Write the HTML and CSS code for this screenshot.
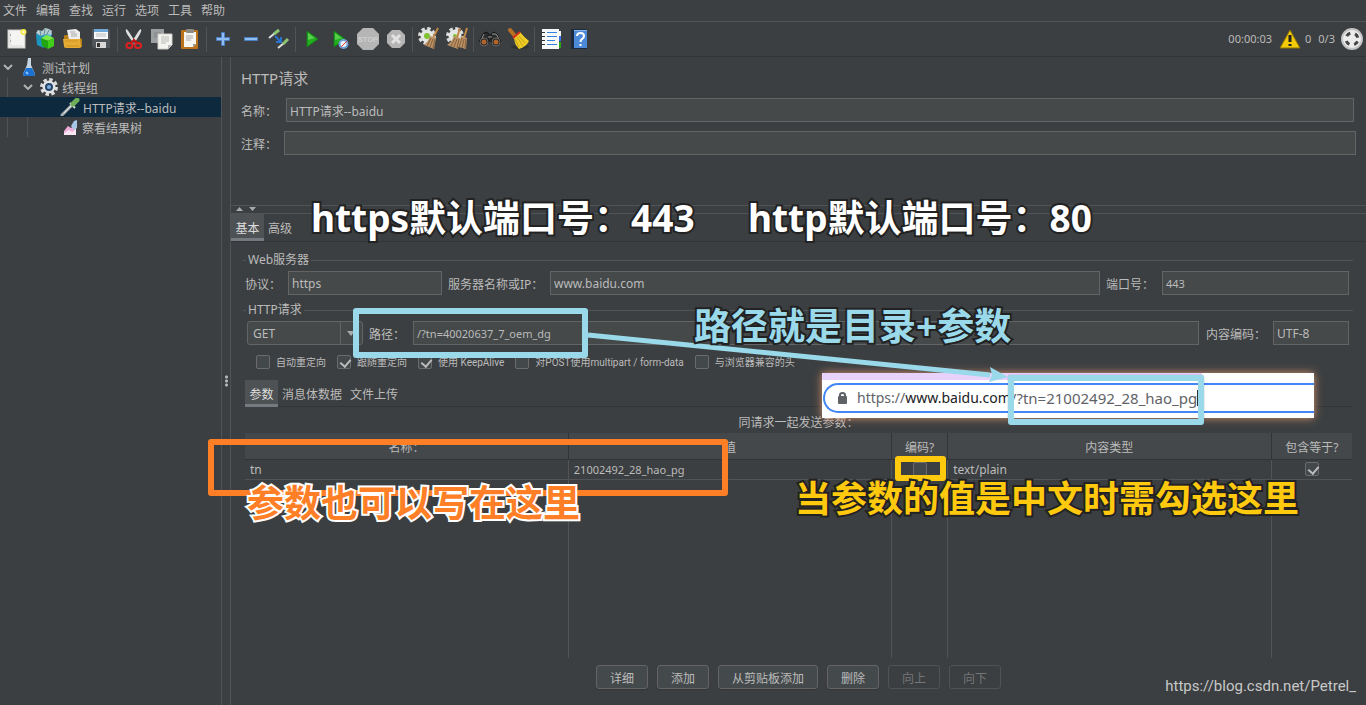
FILE: index.html
```html
<!DOCTYPE html>
<html lang="zh-CN">
<head>
<meta charset="utf-8">
<title>HTTP请求--baidu</title>
<link rel="stylesheet" href="styles.css">
</head>
<body>
<div class="app">
  <nav class="menubar">
    <button class="menu">文件</button><button class="menu">编辑</button><button class="menu">查找</button><button class="menu">运行</button><button class="menu">选项</button><button class="menu">工具</button><button class="menu">帮助</button>
  </nav>

  <div class="toolbar">
    <button class="tool" aria-label="新建"><svg width="20" height="22" viewBox="0 0 20 22"><rect x="1" y="2" width="17" height="18" fill="#f4f4f2" stroke="#c9c9c4"/><path d="M3 4v14M3 18h13" stroke="#d8d8d6" fill="none"/><path d="M3 7h1M3 13h1" stroke="#777"/><circle cx="16.500" cy="4" r="3" fill="#f5e43c"/><circle cx="16.500" cy="4" r="1.500" fill="#fffbd0"/></svg></button>
    <button class="tool" aria-label="模板"><svg width="20" height="22" viewBox="0 0 20 22"><path d="M1 6l8-1v15l-7-3z" fill="#1c94bd"/><path d="M9 4l8 1-1 5-7 3z" fill="#49b6d5"/><path d="M1 5l2-3 4 1 3-3 4 1 3 2-1 4-5-1-5 2z" fill="#b9cdd2"/><path d="M5 2l1 6M10 1l-1 6M14 2l-3 6" stroke="#568b95"/><path d="M6 10l6-3 7 3-6 3z" fill="#7bea42"/><path d="M6 10l7 3v8l-6-3z" fill="#22a60f"/><path d="M13 13l6-3v8l-6 3z" fill="#42cd1b"/></svg></button>
    <button class="tool" aria-label="打开"><svg width="20" height="22" viewBox="0 0 20 22"><path d="M1 8q0-1 2-1h3l2 3h9q2 0 2 2v7H1z" fill="#b88118"/><path d="M4 2l9-1 4 3v8H6z" fill="#eee"/><path d="M7 4h5M8 6h6M8 8h6" stroke="#aaa"/><path d="M0 11h17l1 8q0 1-2 1H3q-2 0-2-2z" fill="#e5ac36"/><path d="M2 13h13M3 18h13" stroke="#cf911c"/></svg></button>
    <button class="tool" aria-label="保存"><svg width="20" height="22" viewBox="0 0 20 22"><path d="M1 1h17l1 1v18H3l-2-2z" fill="#50555c"/><path d="M3 1h14v10H3z" fill="#f5f7f8"/><path d="M3 1h14v3H3z" fill="#6fa7d7"/><path d="M5 6h10M5 8h10" stroke="#bbb"/><path d="M5 14h10v6H5z" fill="#d8d8d8"/><path d="M6 15h3v4H6z" fill="#333"/></svg></button>
    <span class="sep"></span>
    <button class="tool" aria-label="剪切"><svg width="18" height="22" viewBox="0 0 18 22"><path d="M1 1q1 0 3 3l7 11-2 1L2 6Q0 3 1 1zM16 1q-1 0-3 3L6 15l3 1 6-10q2-3 1-5z" fill="#dfdfdf"/><ellipse cx="4.500" cy="17.500" rx="3" ry="2.500" fill="none" stroke="#e02020" stroke-width="2"/><ellipse cx="13" cy="17.500" rx="3" ry="2.500" fill="none" stroke="#e02020" stroke-width="2"/><path d="M6 15l3-3 3 3" stroke="#c41414" stroke-width="2" fill="none"/></svg></button>
    <button class="tool" aria-label="复制"><svg width="22" height="22" viewBox="0 0 22 22"><path d="M0 1h13v14H0z" fill="#9da0a2"/><path d="M3 5h7M3 7h7M3 9h5" stroke="#818486"/><path d="M7 6h14v11l-4 4H7z" fill="#f3f3ef" stroke="#cfcfca"/><path d="M10 9h8M10 11h8M10 13h8M10 15h5" stroke="#b8b8b4"/><path d="M17 21v-4h4z" fill="#bbb"/></svg></button>
    <button class="tool" aria-label="粘贴"><svg width="20" height="22" viewBox="0 0 20 22"><rect x="1" y="2" width="17" height="19" rx="1" fill="#bb731b"/><path d="M4 4h12v12l-3 3H4z" fill="#f5f5f1"/><rect x="6" y="1" width="8" height="4" rx="1" fill="#8c8b84"/><path d="M6 8h7M6 10h7M6 12h5" stroke="#aaa"/><path d="M13 19v-3h3z" fill="#999"/></svg></button>
    <span class="sep"></span>
    <button class="tool" aria-label="展开"><svg width="16" height="16" viewBox="0 0 16 16"><path d="M6.500 1.500h3v5h5v3h-5v5h-3v-5h-5v-3h5z" fill="#8fbdf2" stroke="#4b7fc4"/></svg></button>
    <button class="tool" aria-label="折叠"><svg width="16" height="16" viewBox="0 0 16 16"><path d="M1.500 6.500h13v3h-13z" fill="#8fbdf2" stroke="#4b7fc4"/></svg></button>
    <button class="tool" aria-label="切换"><svg width="22" height="22" viewBox="0 0 22 22"><path d="M1 10l6-5" stroke="#ddd" stroke-width="2"/><path d="M6 6l5-4" stroke="#8cc474" stroke-width="3"/><path d="M10 20l6-5" stroke="#ddd" stroke-width="2"/><path d="M15 16l5-5" stroke="#8cc474" stroke-width="3"/><path d="M7 8l5 5M13 9v5H8" stroke="#2873d0" stroke-width="2" fill="none"/></svg></button>
    <span class="sep"></span>
    <button class="tool" aria-label="启动"><svg width="14" height="20" viewBox="0 0 14 20"><path d="M2 2l11 8-11 8z" fill="#23ad20" stroke="#137c14"/><path d="M3 4l7 5-7 2z" fill="#56cf4b"/></svg></button>
    <button class="tool" aria-label="不停顿启动"><svg width="18" height="22" viewBox="0 0 18 22"><path d="M3 3l11 8-11 8z" fill="#23ad20" stroke="#137c14"/><path d="M4 5l7 5-7 2z" fill="#56cf4b"/><circle cx="12.500" cy="16" r="4" fill="#eef3fa" stroke="#6ea3d8" stroke-width="2"/><path d="M10 19l6-6" stroke="#e03c31"/></svg></button>
    <button class="tool" aria-label="停止"><svg width="24" height="24" viewBox="0 0 24 24"><path d="M7 1h10l6 6v10l-6 6H7l-6-6V7z" fill="#b5b5b5"/><text x="12" y="15" text-anchor="middle" class="stop-text">STOP</text></svg></button>
    <button class="tool" aria-label="关闭"><svg width="20" height="20" viewBox="0 0 20 20"><path d="M6 1h8l5 5v8l-5 5H6l-5-5V6z" fill="#b5b5b5"/><path d="M6 6l8 8M14 6l-8 8" stroke="#e2e2e2" stroke-width="3"/></svg></button>
    <span class="sep"></span>
    <button class="tool" aria-label="清除"><svg width="22" height="24" viewBox="0 0 22 24"><circle cx="9" cy="9" r="7.500" fill="none" stroke="#ddd" stroke-width="3" stroke-dasharray="3.400 2.490"/><circle cx="9" cy="9" r="6.500" fill="#e5e7e4"/><circle cx="9" cy="9" r="3" fill="#82c332"/><path d="M20 1l-5 10" stroke="#c28848" stroke-width="2"/><path d="M12 9l6 2-2 11-10-4q4-3 6-9z" fill="#ba9266"/><path d="M13 11l-4 8M15 12l-3 8M17 12l-2 9" stroke="#86603b"/></svg></button>
    <button class="tool" aria-label="清除全部"><svg width="24" height="24" viewBox="0 0 24 24"><circle cx="10" cy="9" r="7.500" fill="none" stroke="#ddd" stroke-width="3" stroke-dasharray="3.400 2.490"/><circle cx="10" cy="9" r="6.500" fill="#e5e7e4"/><circle cx="10" cy="9" r="2" fill="#82c332"/><path d="M15 1l-3 10M22 1l-3 10" stroke="#c28848" stroke-width="2"/><path d="M9 9l6 2-2 11-11-4q5-3 7-9zM16 9l6 2-1 11-11-3q5-4 6-10z" fill="#ba9266"/><path d="M10 11l-4 8M12 12l-3 8M14 12l-2 9M17 11l-3 9M19 12l-2 9M21 12l-1 9" stroke="#86603b"/></svg></button>
    <span class="sep"></span>
    <button class="tool" aria-label="查找"><svg width="24" height="18" viewBox="0 0 24 18"><path d="M5 4l3-2 3 2v8H1zM13 4l3-2 3 2 4 8H13z" fill="#292b2c" stroke="#111"/><path d="M6 4l-3 6M14 4h4l3 5M10 7h4" stroke="#9a9a9a" fill="none"/><circle cx="6" cy="12" r="4" fill="#222" stroke="#666"/><circle cx="18" cy="12" r="4" fill="#222" stroke="#666"/><circle cx="6" cy="12" r="2.500" fill="#b0652c"/><circle cx="18" cy="12" r="2.500" fill="#b0652c"/></svg></button>
    <button class="tool" aria-label="重置查找"><svg width="24" height="24" viewBox="0 0 24 24"><ellipse cx="14" cy="20" rx="9" ry="2" fill="#303234"/><path d="M4 3l5 6" stroke="#b87023" stroke-width="4" stroke-linecap="round"/><path d="M8 10l6-5q4 5 9 9-3 6-10 8-5-5-5-12z" fill="#edcd25"/><path d="M11 10l6 9M13 9l6 7M9 12l4 8" stroke="#c3a012"/><path d="M7 11l7-6" stroke="#d52d1e" stroke-width="2"/></svg></button>
    <span class="sep"></span>
    <button class="tool" aria-label="函数助手"><svg width="22" height="22" viewBox="0 0 22 22"><path d="M18 3h3v5h-3z" fill="#f2f2f2"/><path d="M18 8h3v5h-3z" fill="#3776e4"/><path d="M18 14h3v6h-3z" fill="#25a319"/><rect x="2" y="1" width="17" height="20" fill="#f5f7f9"/><path d="M7 4.500h10M7 8.500h10M7 12.500h8M7 16.500h10" stroke="#3082dd"/><path d="M1 4.500h4M1 8.500h4M1 12.500h4M1 16.500h4" stroke="#333"/></svg></button>
    <button class="tool" aria-label="帮助"><svg width="18" height="22" viewBox="0 0 18 22"><path d="M1 1h16v20H1z" fill="#1c2b3f"/><path d="M4 2h13v18H4z" fill="#4d89d9"/><path d="M4 2h13v1H4z" fill="#8db8ee"/><path d="M7 8q0-3 3.500-3T14 8q0 2-2 3-1.500 1-1.500 3M10.500 16v2" stroke="#fff" stroke-width="2" fill="none"/></svg></button>
    <div class="status">
      <span>00:00:03</span>
      <svg class="warn" width="22" height="20" viewBox="0 0 22 20"><path d="M11 1l10 18H1z" fill="#f3c908" stroke="#8b7408" stroke-linejoin="round"/><path d="M11 6v7" stroke="#222" stroke-width="3"/><path d="M11 15v2" stroke="#222" stroke-width="3"/></svg>
      <span>0</span><span class="threads">0/3</span>
      <svg width="24" height="24" viewBox="0 0 24 24"><circle cx="12" cy="12" r="11" fill="#c4c4c4"/><circle cx="12" cy="12" r="9" fill="#ececec"/><circle cx="12" cy="12" r="6" fill="none" stroke="#444" stroke-width="3" stroke-dasharray="4.420 5" stroke-dashoffset="-2.500"/></svg>
    </div>
  </div>

  <div class="body">
    <aside class="tree">
      <div class="node"><svg class="chev" width="10" height="6" viewBox="0 0 10 6"><path d="M1 1l4 4 4-4" stroke="#b0b0b0" stroke-width="2" fill="none"/></svg><svg class="flask" width="14" height="20" viewBox="0 0 14 20"><path d="M6 1h3v7l4 9q0 2-2 2H3q-2 0-2-2l4-9z" fill="#c6d5e2"/><path d="M4 11h6l3 6q0 2-2 2H3q-2 0-2-2z" fill="#1c70d1"/><path d="M4 15l2 2" stroke="#8bc0ff" stroke-width="2"/></svg><span>测试计划</span></div>
      <div class="node level-1"><svg class="chev" width="10" height="6" viewBox="0 0 10 6"><path d="M1 1l4 4 4-4" stroke="#b0b0b0" stroke-width="2" fill="none"/></svg><svg class="gear" width="18" height="18" viewBox="0 0 18 18"><circle cx="9" cy="9" r="7.500" fill="none" stroke="#dcdcdc" stroke-width="3" stroke-dasharray="3.400 2.490"/><circle cx="9" cy="9" r="6.500" fill="#e4e4e4"/><circle cx="9" cy="9" r="4" fill="#24466d"/><circle cx="9" cy="9" r="2" fill="#84add8"/></svg><span>线程组</span></div>
      <div class="node level-2 selected"><svg width="20" height="18" viewBox="0 0 20 18"><path d="M2 17l10-10" stroke="#a9aeb0" stroke-width="3" stroke-linecap="round"/><path d="M4 15l7-7" stroke="#e8e8e8"/><path d="M10 5l5 5" stroke="#ddd" stroke-width="2"/><path d="M13 6l4-4" stroke="#6fae5b" stroke-width="5" stroke-linecap="round"/></svg><span>HTTP请求--baidu</span></div>
      <div class="node level-2"><svg width="19" height="18" viewBox="0 0 19 18"><path d="M2 1v15" stroke="#292b2d" stroke-dasharray="1 2"/><path d="M4 13l4-5 3 2 5-4v10H4z" fill="#f0acd9"/><path d="M4 15l5-3 3 2 4-3v6H4z" fill="#fae6f4"/><path d="M11 8l3-5 3-1v8l-3 2z" fill="#a6c7e7"/></svg><span>察看结果树</span></div>
    </aside>
    <div class="divider"><span class="grip"></span></div>

    <main class="panel">
      <section class="top">
        <h1>HTTP请求</h1>
        <div class="field name"><label for="name">名称：</label><input id="name" value="HTTP请求--baidu"></div>
        <div class="field note"><label for="note">注释：</label><input id="note"></div>
      </section>
      <div class="hsplit"><i class="up"></i><i class="down"></i></div>
      <div class="tabs outer"><button class="tab active">基本</button><button class="tab">高级</button></div>

      <div class="content">
        <section class="group">
          <h2>Web服务器</h2>
          <div class="line">
            <label class="w-first" for="proto">协议：</label><input class="w-proto" id="proto" value="https">
            <label class="w-server" for="server">服务器名称或IP：</label><input class="grow" id="server" value="www.baidu.com">
            <label class="w-port" for="port">端口号：</label><input class="port num" id="port" value="443">
          </div>
        </section>
        <section class="group">
          <h2>HTTP请求</h2>
          <div class="line second">
            <span class="combo"><select aria-label="方法"><option>GET</option></select></span>
            <label class="w-path" for="path">路径：</label><input class="grow num" id="path" value="/?tn=40020637_7_oem_dg">
            <label class="w-enc" for="enc">内容编码：</label><input class="enc" id="enc" value="UTF-8">
          </div>
        </section>
        <div class="checks">
          <label><input type="checkbox">自动重定向</label>
          <label><input type="checkbox" checked>跟随重定向</label>
          <label><input type="checkbox" checked>使用 KeepAlive</label>
          <label><input type="checkbox">对POST使用multipart / form-data</label>
          <label><input type="checkbox">与浏览器兼容的头</label>
        </div>
        <div class="tabs inner"><button class="tab active">参数</button><button class="tab">消息体数据</button><button class="tab">文件上传</button></div>
        <p class="caption">同请求一起发送参数：</p>
        <div class="table-wrap">
          <table>
            <colgroup><col><col><col class="c-enc"><col><col class="c-eq"></colgroup>
            <thead><tr><th>名称：</th><th>值</th><th>编码?</th><th>内容类型</th><th>包含等于?</th></tr></thead>
            <tbody>
              <tr class="row"><td>tn</td><td class="num">21002492_28_hao_pg</td><td class="mid"><input type="checkbox" aria-label="编码"></td><td>text/plain</td><td class="mid"><input type="checkbox" checked aria-label="包含等于"></td></tr>
              <tr class="rest"><td></td><td></td><td></td><td></td><td></td></tr>
            </tbody>
          </table>
        </div>
        <div class="actions">
          <button>详细</button><button>添加</button><button>从剪贴板添加</button><button>删除</button><button disabled>向上</button><button disabled>向下</button>
        </div>
      </div>
    </main>
  </div>
</div>

<div class="notes">
  <div class="address">
    <div class="omnibox">
      <svg width="12" height="14" viewBox="0 0 12 14"><rect x="1" y="5" width="9" height="8" rx="1" fill="#5f6368"/><path d="M3 6V4q0-2 2.500-2T8 4v2" stroke="#5f6368" stroke-width="2" fill="none"/></svg>
      <span class="scheme">https://</span><span class="host">www.baidu.com</span><span class="query">/?tn=21002492_28_hao_pg</span>
    </div>
  </div>
  <div class="frame frame-path"></div>
  <div class="frame frame-query"></div>
  <div class="frame frame-params"></div>
  <div class="frame frame-encode"></div>
  <svg class="arrow" width="430" height="60" viewBox="0 0 430 60"><path d="M4 7L406 47" stroke="#99d9ea" stroke-width="5"/><path d="M406 39l18 10-19 5 3-7z" fill="#99d9ea"/></svg>
  <p class="big white n-https">https默认端口号：443</p>
  <p class="big white n-http">http默认端口号：80</p>
  <p class="big cyan">路径就是目录+参数</p>
  <p class="big orange">参数也可以写在这里</p>
  <p class="big yellow">当参数的值是中文时需勾选这里</p>
  <p class="watermark">https://blog.csdn.net/Petrel_</p>
</div>
</body>
</html>
```
FILE: styles.css
```css
* { box-sizing: border-box; }
body {
  margin: 0;
  background: #3c3f41;
  color: #bbb;
  font: 12px/16px "Noto Sans", "Noto Sans CJK SC", sans-serif;
}
button, input, select { font: inherit; color: inherit; margin: 0; }
button { border: 0; background: none; padding: 0; }
svg { display: block; flex: none; }
h1, h2, p { margin: 0; font-weight: normal; }
.app { display: flex; flex-direction: column; min-height: 100vh; }

.menubar { display: flex; gap: 9px; height: 22px; padding: 1px 3px 0; border-bottom: 1px solid #515456; }
.toolbar { display: flex; align-items: center; height: 35px; padding: 0 2px 0 3px; border-bottom: 1px solid #323537; }
.tool { display: flex; align-items: center; justify-content: center; width: 28px; height: 28px; }
.sep { width: 5px; height: 25px; background: linear-gradient(#515456, #515456) center / 1px 100% no-repeat; }
.stop-text { fill: #d8d8d8; font: 8px Roboto, sans-serif; }
.status { display: flex; align-items: center; margin-left: auto; font-size: 11px; }
.warn { margin: 0 4px 0 7px; }
.threads { margin: 0 5px 0 7px; }

.body { display: flex; flex: 1; }
.tree {
  width: 221px;
  background:
    linear-gradient(#505355, #505355) 7px 20px / 1px 60px no-repeat,
    linear-gradient(#505355, #505355) 27px 40px / 1px 40px no-repeat;
}
.node { display: flex; align-items: center; height: 20px; padding-left: 3px; line-height: 16px; }
.node span { padding-top: 3px; }
.level-1 { padding-left: 23px; }
.level-2 { padding-left: 60px; gap: 3px; }
.selected { background: linear-gradient(#0d293e, #0d293e); }
.flask { margin: 0 6px 0 9px; }
.gear { margin: 0 4px 0 7px; }
.divider { display: flex; align-items: center; justify-content: center; width: 10px; border: solid #515456; border-width: 0 1px; }
.grip { width: 3px; height: 12px; background: radial-gradient(circle, #bbb 1px, transparent 2px) 0 0 / 3px 4px; }

.panel { display: flex; flex-direction: column; flex: 1; min-width: 0; }
.top { height: 148px; padding: 9px 10px 0 10px; }
h1 { font-size: 15px; line-height: 24px; }
.field { display: flex; align-items: center; }
.name { margin: 8px 2px 9px 0; }
.field label { flex: none; width: 45px; padding-top: 3px; }
.note label { width: 43px; }
input:not([type]) { flex: none; height: 24px; min-width: 0; padding: 1px 3px 0; border: 1px solid #646464; border-radius: 0; background: #45494a; outline: 0; }
.field input:not([type]), .line .grow { flex: 1; }
input.num, td.num { font-size: 11px; }

.hsplit { display: flex; gap: 6px; height: 9px; padding: 1px 5px 0; border: solid #515456; border-width: 1px 0; }
.hsplit i { width: 7px; height: 4px; background: #aaa; }
.up { clip-path: polygon(50% 0, 100% 100%, 0 100%); }
.down { clip-path: polygon(0 0, 100% 0, 50% 100%); }

.tabs { display: flex; height: 28px; border-bottom: 1px solid #323537; }
.tab { height: 27px; padding: 3px 4px 0; }
.tab.active { width: 33px; background: #4e5254; border-bottom: 3px solid #747a80; color: #ddd; padding-top: 5px; }
.content { display: flex; flex-direction: column; flex: 1; padding: 10px 14px 16px; }
h2 { display: flex; align-items: center; gap: 2px; height: 16px; margin: 0 -1px 0 -2px; font-size: 12px; line-height: 16px; }
h2::before, h2::after { content: ""; height: 1px; background: #515456; }
h2::before { width: 3px; }
h2::after { flex: 1; }
.line { display: flex; align-items: center; padding: 3px 3px 0 0; margin-bottom: 7px; }
.line label { flex: none; padding-top: 3px; }
.line .w-first { width: 43px; }
.w-proto { width: 154px; }
.line .w-server { width: 108px; padding-left: 6px; }
.line .w-port { width: 62px; padding-left: 6px; }
.port { width: 187px; }
.line .w-path { width: 50px; padding-left: 6px; }
.line .w-enc { width: 74px; padding-left: 7px; }
.enc { width: 76px; }
.second { padding-left: 2px; }
.combo { position: relative; width: 116px; height: 24px; }
.combo select { width: 100%; height: 24px; padding: 1px 5px 0; appearance: none; border: 1px solid #646464; border-radius: 3px; background: linear-gradient(#646464, #646464) 92px 0 / 1px 100% no-repeat #45494a; }
.combo::after { content: ""; position: absolute; right: 8px; top: 10px; width: 8px; height: 5px; background: #aaa; clip-path: polygon(0 0, 100% 0, 50% 100%); }

.checks { display: flex; gap: 11px; padding: 3px 0 0 11px; height: 20px; font: 10px/16px Roboto, "Noto Sans CJK SC", sans-serif; }
.checks label { display: flex; gap: 6px; }
input[type="checkbox"] { flex: none; display: block; appearance: none; width: 14px; height: 14px; border: 1px solid #6b6b6b; border-radius: 2px; background: #43494a; }
input[type="checkbox"]:checked::after { content: ""; display: block; width: 5px; height: 8px; margin: 1px 0 0 4px; border: solid #bbb; border-width: 0 2px 2px 0; transform: rotate(40deg); }
.inner { margin-top: 8px; height: 27px; }
.caption { height: 26px; padding-top: 8px; text-align: center; }

.table-wrap { display: grid; flex: 1; }
table { width: 100%; height: 100%; table-layout: fixed; border-collapse: collapse; }
.c-enc { width: 56px; }
.c-eq { width: 81px; }
thead tr { height: 26px; background: #45484a; }
th { padding: 5px 0 0; font-weight: normal; border-bottom: 1px solid #323537; }
th + th { border-left: 1px solid #323537; }
td { padding: 2px 5px 0; }
td + td { border-left: 1px solid #515456; }
.row { height: 20px; }
.row td { border-bottom: 1px solid #515456; }
.row .mid { padding-top: 0; }
.mid input[type="checkbox"] { margin: 0 auto; }
.actions { display: flex; justify-content: center; gap: 9px; padding-top: 7px; }
.actions button { height: 24px; min-width: 52px; padding: 3px 13px 0; border: 1px solid #646464; border-radius: 3px; background: #444a4c; box-shadow: 0 1px 1px #333638; }
.actions button:disabled { border-color: #505355; background: none; box-shadow: none; color: #737577; }

.notes { position: absolute; left: 0; top: 0; width: 100%; height: 705px; overflow: hidden; pointer-events: none; }
.notes > * { position: absolute; white-space: nowrap; }
.address { left: 822px; top: 373px; width: 492px; height: 45px; padding-top: 10px; background: linear-gradient(#e6d2fa, #e6d2fa) 0 0 / 380px 7px no-repeat #fff; box-shadow: 0 0 8px #d9936f; }
.omnibox { display: flex; align-items: center; height: 30px; margin-left: 1px; padding-left: 12px; border: 2px solid #4285f4; border-right: 0; border-radius: 15px 0 0 15px; font-size: 14px; color: #5f6368; }
.scheme { margin-left: 8px; }
.host { color: #202124; }
.query { font-size: 15px; border-right: 1px solid #333; }
.frame { border: 6px solid #99d9ea; border-radius: 3px; box-shadow: 0 0 1px #2d4b52; }
.frame-path { left: 353px; top: 308px; width: 235px; height: 50px; }
.frame-query { left: 1008px; top: 375px; width: 196px; height: 50px; }
.frame-params { left: 208px; top: 439px; width: 520px; height: 57px; border-color: #ff7f27; }
.frame-encode { left: 895px; top: 456px; width: 51px; height: 25px; border-color: #ffc90e; }
.arrow { left: 584px; top: 328px; }
.big { font-size: 37px; line-height: 44px; font-weight: bold; -webkit-text-stroke: 4px #222; paint-order: stroke fill; }
.white { top: 196px; color: #fff; }
.n-https { left: 311px; }
.n-http { left: 748px; }
.cyan { left: 694px; top: 304px; color: #99d9ea; }
.orange { left: 247px; top: 481px; color: #ff7f27; -webkit-text-stroke-color: #fff; }
.yellow { left: 795px; top: 477px; color: #ffc90e; font-size: 36px; }
.watermark { right: 10px; bottom: 10px; font: 15px/18px Roboto, sans-serif; color: #c8c8c8; }
```
